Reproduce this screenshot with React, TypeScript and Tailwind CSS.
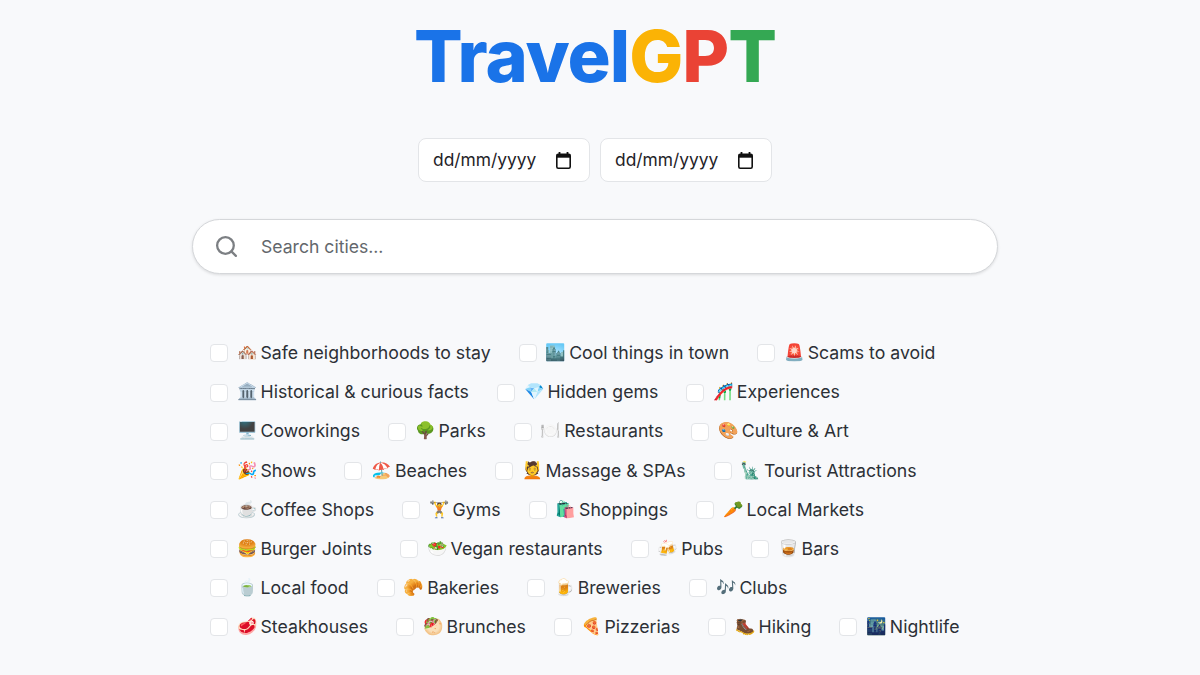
import React from 'react';
import { Search } from 'lucide-react';

const rows: [string, string][][] = [
  [['🏘️', 'Safe neighborhoods to stay'], ['🏙️', 'Cool things in town'], ['🚨', 'Scams to avoid']],
  [['🏛️', 'Historical & curious facts'], ['💎', 'Hidden gems'], ['🎢', 'Experiences']],
  [['🖥️', 'Coworkings'], ['🌳', 'Parks'], ['🍽️', 'Restaurants'], ['🎨', 'Culture & Art']],
  [['🎉', 'Shows'], ['🏖️', 'Beaches'], ['💆', 'Massage & SPAs'], ['🗽', 'Tourist Attractions']],
  [['☕', 'Coffee Shops'], ['🏋️', 'Gyms'], ['🛍️', 'Shoppings'], ['🥕', 'Local Markets']],
  [['🍔', 'Burger Joints'], ['🥗', 'Vegan restaurants'], ['🍻', 'Pubs'], ['🥃', 'Bars']],
  [['🍵', 'Local food'], ['🥐', 'Bakeries'], ['🍺', 'Breweries'], ['🎶', 'Clubs']],
  [['🥩', 'Steakhouses'], ['🥙', 'Brunches'], ['🍕', 'Pizzerias'], ['🥾', 'Hiking'], ['🌃', 'Nightlife']],
];

const DateField: React.FC = () => (
  <div className="flex h-[44px] w-[172px] items-center justify-between rounded-lg border border-[#e3e5e8] bg-white pl-[14px] pr-[18px] text-[17.4px] text-[#1f2328]">
    <span className="pt-[1px]">dd/mm/yyyy</span>
    <svg width="15" height="17" viewBox="0 0 15 17" fill="none" aria-hidden="true">
      <path d="M3.5 0v2.5M11.5 0v2.5" stroke="#111" strokeWidth="1.8" />
      <rect x="0.8" y="2.3" width="13.4" height="13.9" rx="1.4" stroke="#111" strokeWidth="1.6" />
      <rect x="0.8" y="2.3" width="13.4" height="3.4" fill="#111" />
    </svg>
  </div>
);

const App: React.FC = () => {
  return (
    <div className="flex h-[675px] w-[1200px] flex-col items-center overflow-hidden bg-[#f8f9fb] pr-[10px] font-['Inter',sans-serif]">
      <h1 className="mt-[13px] h-[86px] text-[72px] leading-[86px] font-extrabold tracking-[-1px]">
        <span className="text-[#1a73e8]">Travel</span>
        <span className="text-[#fbb305]">G</span>
        <span className="text-[#ea4335]">P</span>
        <span className="text-[#34a853]">T</span>
      </h1>

      <div className="mt-[39px] flex gap-[10px]">
        <DateField />
        <DateField />
      </div>

      <div className="mt-[37px] flex h-[55px] w-[806px] items-center rounded-full border border-[#d5d7da] bg-white pl-[21px] shadow-[0_1px_3px_rgba(0,0,0,0.12)]">
        <Search className="h-[25px] w-[25px] text-[#7c7f83]" strokeWidth={2.2} />
        <span className="ml-[22px] pt-[2px] text-[17.6px] text-[#63676c]">Search cities...</span>
      </div>

      <div className="mt-[66px] flex w-[806px] flex-col gap-[12.14px] pl-[18px]">
        {rows.map((row, i) => (
          <div key={i} className="flex h-[27px] items-center gap-[28px] text-[17.7px] text-[#2c3036]">
            {row.map(([emoji, label]) => (
              <label key={label} className="flex items-center whitespace-nowrap">
                <span className="h-[18px] w-[18px] shrink-0 rounded-[4px] border border-[#e3e5e8] bg-white" />
                <span className="ml-[9px] w-[23.5px] shrink-0 text-[16.5px] leading-none font-['Noto_Color_Emoji','Apple_Color_Emoji',sans-serif]">{emoji}</span>
                <span>{label}</span>
              </label>
            ))}
          </div>
        ))}
      </div>
    </div>
  );
};

export default App;
